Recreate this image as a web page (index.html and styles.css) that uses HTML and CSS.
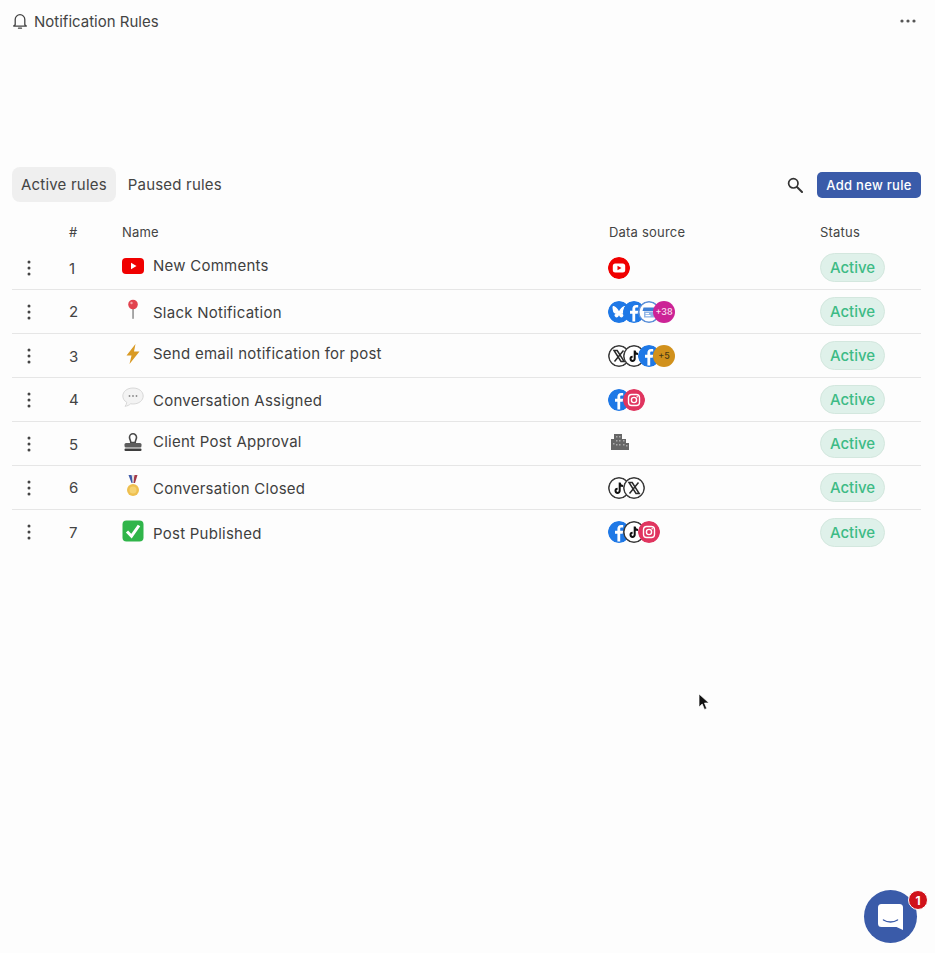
FILE: index.html
```html
<!DOCTYPE html>
<html lang="en">
<head>
<meta charset="utf-8">
<title>Notification Rules</title>
<link rel="stylesheet" href="styles.css">
</head>
<body>
<svg class="defs" width="0" height="0" aria-hidden="true">
  <symbol id="i-fb" viewBox="0 0 22 22"><circle cx="11" cy="11" r="11" fill="#1e78e6"/><path d="M12.2 20.5v-7.7h2.5l.4-3h-2.9V8c0-.9.3-1.4 1.5-1.4h1.5V4c-.4 0-1.2-.1-2.1-.1-2.2 0-3.7 1.3-3.7 3.8v2.1H7v3h2.4v7.7z" fill="#fff"/></symbol>
  <symbol id="i-bs" viewBox="0 0 22 22"><circle cx="11" cy="11" r="11" fill="#1e78e6"/><path d="M11 10.2C10.2 8.6 8 5.900 6.300 5.300 5 4.800 4.500 5.300 4.500 6.600c0 .9.500 3.800.8 4.500.700 1.600 2.300 1.900 3.300 1.700-1.600.3-2.900 1-1.600 2.700 1.400 1.700 2.900.900 4-1.300 1.100 2.200 2.600 3 4 1.300 1.300-1.700 0-2.400-1.600-2.700 1 .2 2.600-.1 3.300-1.700.3-.7.800-3.600.8-4.500 0-1.300-.5-1.800-1.800-1.300-1.700.6-3.900 3.300-4.700 4.900z" fill="#fff"/></symbol>
  <symbol id="i-store" viewBox="0 0 22 22"><circle cx="11" cy="11" r="10.200" fill="#fff" stroke="#5b8fd8" stroke-width="1.500"/><path d="M5.500 6.500h11l1 3.500h-13z" fill="#3d7fd6"/><rect x="6" y="10.500" width="10" height="6" fill="#8fb4e6"/><rect x="7.500" y="12" width="3.500" height="1.200" fill="#fff"/><rect x="7.500" y="14" width="5" height="1.200" fill="#fff"/></symbol>
  <symbol id="i-x" viewBox="0 0 22 22"><circle cx="11" cy="11" r="10.200" fill="#fff" stroke="#3a3a3a" stroke-width="1.500"/><path d="M6 5.500h3.200l7 11H13zM15.500 5.500 6.500 16.500" fill="none" stroke="#2b2b2b" stroke-width="1.500"/></symbol>
  <symbol id="i-tt" viewBox="0 0 22 22"><circle cx="11" cy="11" r="10.200" fill="#fff" stroke="#3a3a3a" stroke-width="1.500"/><path d="M11.700 5.500v8.300a2.100 2.100 0 1 1-2.100-2.100M11.700 5.800c.3 2 1.500 3.100 3.300 3.300" fill="none" stroke="#111" stroke-width="2"/></symbol>
  <symbol id="i-ig" viewBox="0 0 22 22"><circle cx="11" cy="11" r="11" fill="#e0355f"/><rect x="5.500" y="5.500" width="11" height="11" rx="3.200" fill="none" stroke="#fff" stroke-width="1.400"/><circle cx="11" cy="11" r="2.600" fill="none" stroke="#fff" stroke-width="1.400"/><circle cx="14.200" cy="7.800" r=".8" fill="#fff"/></symbol>
  <symbol id="i-yt" viewBox="0 0 22 22"><circle cx="11" cy="11" r="11" fill="#f00000"/><rect x="4.800" y="6.500" width="12.400" height="9" rx="2.500" fill="#fff"/><path d="m9.500 8.800 4 2.200-4 2.200z" fill="#f00000"/></symbol>
  <symbol id="i-dots" viewBox="0 0 4 16"><circle cx="2" cy="2" r="1.500"/><circle cx="2" cy="8" r="1.500"/><circle cx="2" cy="14" r="1.500"/></symbol>
</svg>

<main class="page">
  <header class="top">
    <div class="top-title">
      <svg class="bell" viewBox="0 0 16 18" width="16" height="18"><path d="M3.200 12.800V7.500a4.800 4.800 0 0 1 9.600 0v5.300l1.500 1.300H1.700zM6.500 16.200h3" fill="none" stroke="#444" stroke-width="1.300" stroke-linejoin="round" stroke-linecap="round"/></svg>
      <h1>Notification Rules</h1>
    </div>
    <svg class="more" viewBox="0 0 16 4" width="16" height="4"><circle cx="2" cy="2" r="1.600"/><circle cx="8" cy="2" r="1.600"/><circle cx="14" cy="2" r="1.600"/></svg>
  </header>

  <div class="toolbar">
    <div class="tabs">
      <span class="tab tab-on">Active rules</span>
      <span class="tab">Paused rules</span>
    </div>
    <div class="tools">
      <svg class="search" viewBox="0 0 16 16" width="16" height="16"><circle cx="6.300" cy="6.300" r="4.700" fill="none" stroke="#333" stroke-width="1.700"/><path d="m10 10 5 5" stroke="#333" stroke-width="2" stroke-linecap="round"/></svg>
      <span class="add">Add new rule</span>
    </div>
  </div>

  <div class="grid head">
    <span></span><span>#</span><span>Name</span><span>Data source</span><span>Status</span>
  </div>

  <div class="grid row">
    <svg class="kebab"><use href="#i-dots"/></svg><span class="num num-low">1</span>
    <div class="name">
      <svg class="emoji" viewBox="0 0 22 22"><rect x="0" y="3" width="22" height="16" rx="4" fill="#f00000"/><path d="m9 7.800 5.500 3.200L9 14.200z" fill="#fff"/></svg>
      <span class="label up">New Comments</span>
    </div>
    <div class="src"><svg class="ic"><use href="#i-yt"/></svg></div>
    <span class="pill">Active</span>
  </div>

  <div class="grid row">
    <svg class="kebab"><use href="#i-dots"/></svg><span class="num">2</span>
    <div class="name">
      <svg class="emoji" viewBox="0 0 22 22"><rect x="10.200" y="8" width="1.700" height="12" rx=".8" fill="#9a9a9a"/><circle cx="11" cy="5.500" r="4.800" fill="#e2434f"/><circle cx="9.500" cy="4" r="1.200" fill="#f4a3a8"/></svg>
      <span class="label down">Slack Notification</span>
    </div>
    <div class="src">
      <svg class="ic"><use href="#i-bs"/></svg><svg class="ic"><use href="#i-fb"/></svg><svg class="ic"><use href="#i-store"/></svg><span class="more-count count-pink">+38</span>
    </div>
    <span class="pill">Active</span>
  </div>

  <div class="grid row">
    <svg class="kebab"><use href="#i-dots"/></svg><span class="num num-low">3</span>
    <div class="name">
      <svg class="emoji" viewBox="0 0 22 22"><path d="M13.500 1 4.500 12.500h5L7.500 21l10-12.500h-5.500z" fill="#d99a24"/></svg>
      <span class="label up">Send email notification for post</span>
    </div>
    <div class="src">
      <svg class="ic"><use href="#i-x"/></svg><svg class="ic"><use href="#i-tt"/></svg><svg class="ic"><use href="#i-fb"/></svg><span class="more-count count-gold">+5</span>
    </div>
    <span class="pill">Active</span>
  </div>

  <div class="grid row">
    <svg class="kebab"><use href="#i-dots"/></svg><span class="num">4</span>
    <div class="name">
      <svg class="emoji" viewBox="0 0 22 22"><path d="M11 1C5.200 1 .8 4.500.8 9c0 2.700 1.600 5 4 6.400-.2 1.500-.9 2.900-1.800 3.900 2.200-.2 4.200-1.200 5.600-2.500.8.100 1.600.2 2.400.2 5.800 0 10.200-3.500 10.200-8S16.800 1 11 1z" fill="#f3f3f3" stroke="#cfcfcf" stroke-width=".8"/><circle cx="7.500" cy="9" r=".9" fill="#8a8a8a"/><circle cx="11" cy="9" r=".9" fill="#8a8a8a"/><circle cx="14.500" cy="9" r=".9" fill="#8a8a8a"/></svg>
      <span class="label down">Conversation Assigned</span>
    </div>
    <div class="src">
      <svg class="ic"><use href="#i-fb"/></svg><svg class="ic"><use href="#i-ig"/></svg>
    </div>
    <span class="pill">Active</span>
  </div>

  <div class="grid row">
    <svg class="kebab"><use href="#i-dots"/></svg><span class="num num-low">5</span>
    <div class="name">
      <svg class="emoji" viewBox="0 0 22 22"><path d="M8.800 11.500c0-2-1.300-3-1.300-5.200a3.500 3.500 0 0 1 7 0c0 2.200-1.300 3.200-1.300 5.200z" fill="#fff" stroke="#4a4a4a" stroke-width="1.600"/><rect x="2.500" y="12" width="17" height="4.500" rx="1.500" fill="#5d5d5d"/><rect x="2.500" y="17.500" width="17" height="2.500" rx="1" fill="#3d3d3d"/></svg>
      <span class="label up">Client Post Approval</span>
    </div>
    <div class="src">
      <svg class="bldg" viewBox="0 0 18 16"><path d="M3 0h8v5h4v4h3v7H0V5h3z" fill="#666"/><path d="M5 2h1.500v1.500H5zM8 2h1.500v1.500H8zM5 6h1.500v1.500H5zM8 6h1.500v1.500H8zM12 6h1.500v1.500H12zM2 9h1.500v1.500H2zM5 10h1.500v1.500H5zM8 10h1.500v1.500H8zM12 10h1.500v1.500H12zM15 11h1.500v1.500H15z" fill="#aaa"/></svg>
    </div>
    <span class="pill">Active</span>
  </div>

  <div class="grid row">
    <svg class="kebab"><use href="#i-dots"/></svg><span class="num">6</span>
    <div class="name">
      <svg class="emoji" viewBox="0 0 22 22"><path d="M6.500 0h3l2 8h-2z" fill="#3e5aa8"/><path d="M15.500 0h-3l-1.500 8h2z" fill="#a33a48"/><path d="M10 0h2l-.5 8h-1z" fill="#ddd"/><circle cx="11" cy="15" r="6" fill="#eebf4f"/><circle cx="11" cy="15" r="3.500" fill="#f5d272"/></svg>
      <span class="label down">Conversation Closed</span>
    </div>
    <div class="src">
      <svg class="ic"><use href="#i-tt"/></svg><svg class="ic"><use href="#i-x"/></svg>
    </div>
    <span class="pill">Active</span>
  </div>

  <div class="grid row row-last">
    <svg class="kebab"><use href="#i-dots"/></svg><span class="num">7</span>
    <div class="name">
      <svg class="emoji" viewBox="0 0 22 22"><rect x=".5" y=".5" width="21" height="21" rx="4" fill="#30b54a"/><path d="m5 11.500 4.500 4.700L17 5.500" fill="none" stroke="#fff" stroke-width="3"/></svg>
      <span class="label down">Post Published</span>
    </div>
    <div class="src">
      <svg class="ic"><use href="#i-fb"/></svg><svg class="ic"><use href="#i-tt"/></svg><svg class="ic"><use href="#i-ig"/></svg>
    </div>
    <span class="pill">Active</span>
  </div>
</main>

<svg class="cursor" viewBox="0 0 12 18" width="12" height="18"><path d="M1 1v13l3.200-3 2.300 5.500 2.200-1L6.500 10H11z" fill="#111" stroke="#fff" stroke-width=".7"/></svg>

<div class="chat">
  <svg viewBox="0 0 28 28" width="28" height="28"><path d="M4.500 1h18A3.500 3.500 0 0 1 26 4.500V27l-6.500-3h-15A3.500 3.500 0 0 1 1 20.500v-16A3.500 3.500 0 0 1 4.500 1z" fill="#fff"/><path d="M6.500 17c4 2.700 10 2.700 14 0" fill="none" stroke="#3a5ba9" stroke-width="1.500" stroke-linecap="round"/></svg>
  <span class="badge">1</span>
</div>
</body>
</html>
```

FILE: styles.css
```css
* { box-sizing: border-box; }

html, body { margin: 0; height: 100%; }

body {
  background: #fdfdfd;
  color: #3a3a3a;
  font-family: Inter, "Liberation Sans", sans-serif;
  overflow: hidden;
}

.defs { position: absolute; }

.page { padding: 0 14px 0 12px; }

.top {
  height: 42px;
  margin-bottom: 125px;
  display: flex;
  align-items: center;
  justify-content: space-between;
}

.top-title { display: flex; align-items: center; gap: 6px; }

.bell { flex: none; }

h1 { margin: 0; font-size: 15px; font-weight: 400; color: #444; }

.more { fill: #555; margin-right: 5px; }

.toolbar { display: flex; align-items: center; justify-content: space-between; height: 35px; margin-bottom: 16px; }

.tabs { display: flex; gap: 3px; }

.tab {
  height: 35px;
  padding: 0 9px;
  display: flex;
  align-items: center;
  font-size: 15px;
  border-radius: 8px;
  color: #444;
  letter-spacing: .2px;
}

.tab-on { background: #efefef; }

.tools { display: flex; align-items: center; gap: 14px; }

.add {
  width: 104px;
  height: 26px;
  display: flex;
  align-items: center;
  justify-content: center;
  background: #3a5ba9;
  color: #fff;
  border-radius: 5px;
  font-size: 13px;
  font-weight: 500;
  letter-spacing: .3px;
}

.grid { display: grid; grid-template-columns: 57px 53px 487px 211px 1fr; align-items: center; }

.head { height: 28px; font-size: 13px; color: #444; letter-spacing: .2px; }

.row { height: 44px; border-bottom: 1px solid #e6e6e6; font-size: 15px; }

.row-last { border-bottom: 0; }

.kebab { width: 4px; height: 16px; margin-left: 15px; fill: #444; }

.num { font-size: 15px; color: #444; }

.num-low { margin-top: 2px; }

.name { display: flex; align-items: center; gap: 9px; }

.emoji { width: 22px; height: 22px; flex: none; margin-top: -3px; }

.label { color: #3f3f3f; letter-spacing: .25px; }

.up { margin-top: -4px; }

.down { margin-top: 2px; }

.src { display: flex; align-items: center; margin-left: -1px; }

.ic, .more-count { width: 22px; height: 22px; flex: none; border-radius: 50%; }

.src > * + * { margin-left: -7px; }

.more-count {
  display: flex;
  align-items: center;
  justify-content: center;
  font-size: 9px;
  font-weight: 500;
}

.count-pink { background: #cc2396; color: #fbe3f3; }

.count-gold { background: #d1911c; color: #4a3a14; }

.bldg { width: 18px; height: 16px; margin: -3px 0 0 3px; }

.pill {
  width: 65px;
  height: 29px;
  display: flex;
  align-items: center;
  justify-content: center;
  background: #dff1ea;
  border: 1px solid #d3e7de;
  border-radius: 15px;
  color: #3dbb85;
  font-size: 15px;
  font-weight: 500;
}

.cursor { position: absolute; left: 698px; top: 693px; }

.chat {
  position: absolute;
  left: 864px;
  top: 890px;
  width: 53px;
  height: 53px;
  border-radius: 50%;
  background: #3a5ba9;
  display: flex;
  align-items: center;
  justify-content: center;
}

.badge {
  position: absolute;
  left: 44px;
  top: 0;
  width: 20px;
  height: 20px;
  border-radius: 50%;
  background: #d0121b;
  border: 1px solid #fff;
  color: #fff;
  font-size: 12px;
  font-weight: 700;
  display: flex;
  align-items: center;
  justify-content: center;
}
```
